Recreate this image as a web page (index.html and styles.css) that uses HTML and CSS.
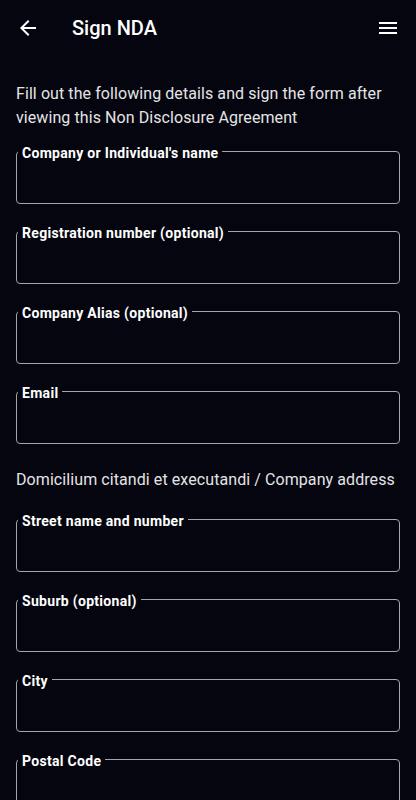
FILE: index.html
```html
<!DOCTYPE html>
<html lang="en">
<head>
    <meta charset="UTF-8">
    <title>Sign NDA</title>
    <link rel="stylesheet" href="styles.css">
</head>
<body>
<div class="bar">
    <span class="bar-btn">
        <svg width="24" height="24" viewBox="0 0 24 24"><path d="M20 11H7.83l5.59-5.59L12 4l-8 8 8 8 1.41-1.41L7.83 13H20v-2z" fill="#fff"/></svg>
    </span>
    <h1 class="bar-title">Sign NDA</h1>
    <span class="bar-btn">
        <svg width="24" height="24" viewBox="0 0 24 24"><path d="M3 18h18v-2H3v2zm0-5h18v-2H3v2zm0-5h18V6H3v2z" fill="#fff"/></svg>
    </span>
</div>
<div class="content">
    <p class="intro">Fill out the following details and sign the form after viewing this Non Disclosure Agreement</p>
    <fieldset class="field"><legend>Company or Individual's name</legend><input type="text"></fieldset>
    <fieldset class="field"><legend>Registration number (optional)</legend><input type="text"></fieldset>
    <fieldset class="field"><legend>Company Alias (optional)</legend><input type="text"></fieldset>
    <fieldset class="field"><legend>Email</legend><input type="text"></fieldset>
    <p class="section">Domicilium citandi et executandi / Company address</p>
    <fieldset class="field"><legend>Street name and number</legend><input type="text"></fieldset>
    <fieldset class="field"><legend>Suburb (optional)</legend><input type="text"></fieldset>
    <fieldset class="field"><legend>City</legend><input type="text"></fieldset>
    <fieldset class="field"><legend>Postal Code</legend><input type="text"></fieldset>
</div>
</body>
</html>
```

FILE: styles.css
```css
* {
    margin: 0;
    padding: 0;
    box-sizing: border-box;
}

body {
    background: #04050e;
    color: #fff;
    font-family: Roboto, "Noto Sans", sans-serif;
}

.bar {
    height: 56px;
    display: flex;
    align-items: center;
    padding: 0 16px;
}

.bar-btn {
    width: 24px;
    height: 24px;
    display: flex;
}

.bar-title {
    flex: 1;
    margin-left: 32px;
    font-size: 20px;
    font-weight: 500;
    color: #fff;
}

.content {
    padding: 26px 16px 40px;
}

.intro,
.section {
    font-size: 16px;
    line-height: 24px;
    letter-spacing: 0.08px;
    color: #e4e4e6;
}

.intro {
    margin-bottom: 12px;
}

.section {
    margin: 24px 0 18px;
}

.field {
    border: 1px solid #a4a4aa;
    border-radius: 4px;
    margin-bottom: 18px;
    padding: 0;
}

.field legend {
    margin-left: 1px;
    padding: 3px 4px 0;
    font-size: 14px;
    line-height: 16px;
    font-weight: 700;
    letter-spacing: 0.3px;
    color: #fff;
}

.field input {
    display: block;
    width: 100%;
    height: 42px;
    background: transparent;
    border: 0;
    outline: none;
    color: #fff;
    font: 16px Roboto, sans-serif;
    padding: 0 12px;
}
```
